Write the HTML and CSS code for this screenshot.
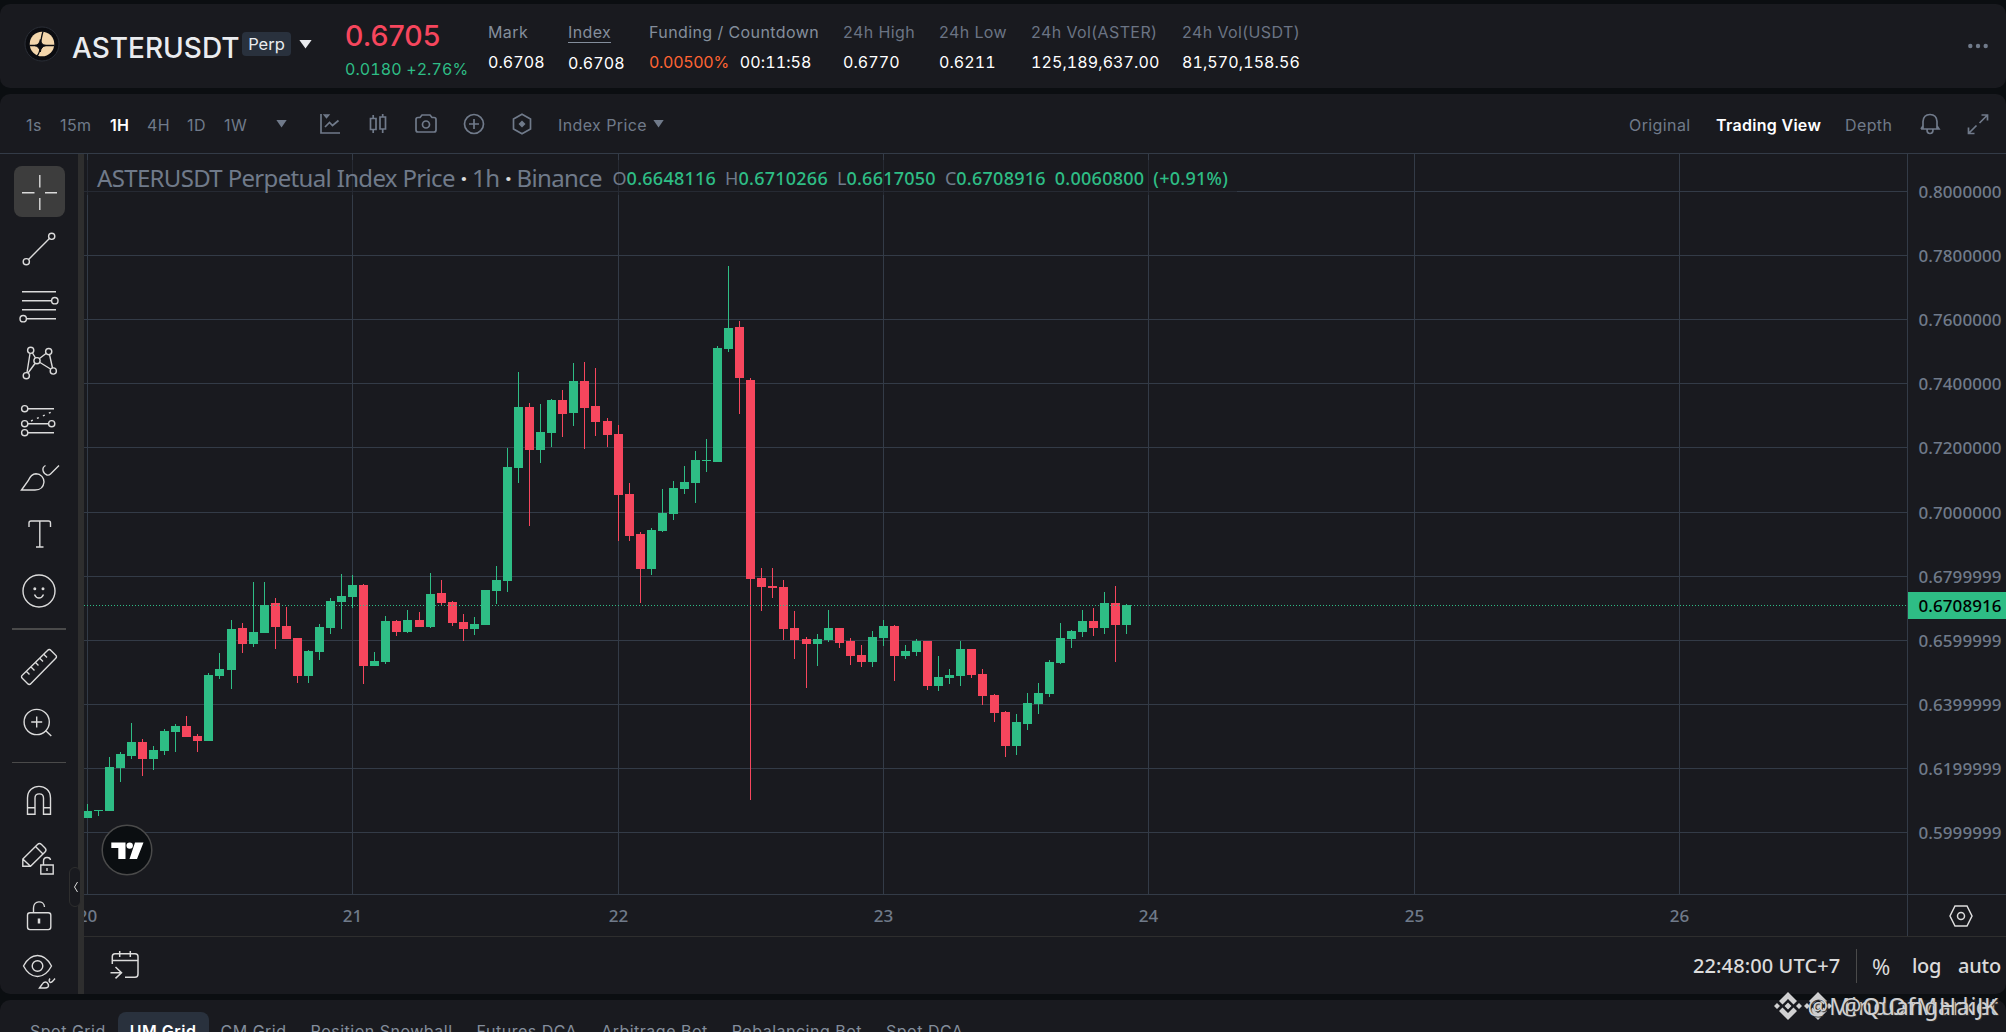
FILE: index.html
```html
<!DOCTYPE html>
<html lang="en">
<head>
  <meta charset="UTF-8" />
  <meta name="viewport" content="width=device-width, initial-scale=1.0" />
  <title>ASTERUSDT Perpetual</title>
  <link rel="stylesheet" href="styles.css">
</head>
<body>
  <header class="ticker">
    <svg class="coin" width="36" height="36" viewBox="0 0 36 36">
      <circle cx="18" cy="18" r="17" fill="#0b0c10" stroke="#2a2e36"/>
      <circle cx="18" cy="18" r="12.3" fill="#f3d6ab"/>
      <path d="M19 5.500C17.500 10 17 14 16.500 19M5.500 19.500H30.500M16.500 20C16 25 15 28 13 30" fill="none" stroke="#0b0c10" stroke-width="1.300"/>
      <path d="M16.300 13.500Q17 19 22 19.500Q17 20.500 16.300 26Q15.500 20.500 10.500 19.500Q15.500 19 16.300 13.500Z" fill="#0b0c10" stroke="#0b0c10"/>
    </svg>
    <h1 class="symbol">ASTERUSDT</h1>
    <span class="perp">Perp</span>
    <span class="caret caret-lg"></span>
    <div class="price">
      <strong>0.6705</strong>
      <span>0.0180 +2.76%</span>
    </div>
    <dl class="stats">
      <div><dt>Mark</dt><dd>0.6708</dd></div>
      <div class="index"><dt><span>Index</span></dt><dd>0.6708</dd></div>
      <div><dt>Funding / Countdown</dt><dd><em>0.00500%</em>00:11:58</dd></div>
      <div class="dim"><dt>24h High</dt><dd>0.6770</dd></div>
      <div class="dim"><dt>24h Low</dt><dd>0.6211</dd></div>
      <div class="dim"><dt>24h Vol(ASTER)</dt><dd>125,189,637.00</dd></div>
      <div class="dim"><dt>24h Vol(USDT)</dt><dd>81,570,158.56</dd></div>
    </dl>
    <svg class="more" width="20" height="6" viewBox="0 0 20 6"><circle cx="2.300" cy="3" r="2.200"/><circle cx="10" cy="3" r="2.200"/><circle cx="17.700" cy="3" r="2.200"/></svg>
  </header>

  <main class="panel">
    <nav class="toolbar">
      <div class="intervals">
        <span>1s</span><span>15m</span><span class="active">1H</span><span>4H</span><span>1D</span><span>1W</span>
      </div>
      <span class="caret"></span>
      <div class="icons">
        <svg viewBox="0 0 24 24"><path d="M3 2V21H22M7 15L11.500 10.500L14.500 13.500L20.500 8.500M6.500 3L8.500 5.500L10.500 3Z"/></svg>
        <svg viewBox="0 0 24 24"><path d="M4.500 6.500H10V17.500H4.500ZM7.200 3V6.500M7.200 17.500V21M14 5H19.500V17H14ZM16.700 2V5M16.700 17V21"/></svg>
        <svg viewBox="0 0 24 24"><path d="M2 7.500Q2 5.500 4 5.500H6L8 3H16L18 5.500H20Q22 5.500 22 7.500V18Q22 20 20 20H4Q2 20 2 18Z"/><circle cx="12" cy="12.500" r="3.500"/></svg>
        <svg viewBox="0 0 24 24"><circle cx="12" cy="12" r="9.500"/><path d="M12 7V17M7 12H17"/></svg>
        <svg viewBox="0 0 24 24"><path d="M12 2.300L20.500 7V17L12 21.700L3.500 17V7Z"/><path d="M12 8.500L15.500 12L12 15.500L8.500 12Z" fill="#707a8a" stroke="none"/></svg>
      </div>
      <span class="source">Index Price</span>
      <span class="caret"></span>
      <div class="views">
        <span>Original</span><span class="active">Trading View</span><span>Depth</span>
      </div>
      <svg class="bell" viewBox="0 0 24 24"><path d="M5 16.500V9.500Q5.500 2.500 12 2.500Q18.500 2.500 19 9.500V16.500M3 17H21L19 14M3 17L5 14M9 17.500Q9 21.500 12 21.500Q15 21.500 15 17.500"/></svg>
      <svg class="expand" viewBox="0 0 24 24"><path d="M15.500 3H21.500V8.500M21 3.500L13.500 11M2.500 15.500V21.500H8.500M3 21L10.500 13.500"/></svg>
    </nav>

    <div class="workspace">
      <aside class="tools">
        <svg class="tool" viewBox="13 163 54 57"><rect x="14" y="166" width="51" height="51" rx="8" fill="#3d3d3d" stroke="none"/><path d="M39.800 175V187.500M39.800 198V210M22 192.700H34.500M45 192.700H57"/></svg>
        <svg class="tool" viewBox="13 220 54 57"><circle cx="51.700" cy="236.300" r="3.100"/><circle cx="26.300" cy="261.700" r="3.100"/><path d="M28.600 259.400L49.400 238.600"/></svg>
        <svg class="tool" viewBox="13 277 54 57"><path d="M22 291.700H56M22 300.700H51.500M22 309.700H56M26.500 318.700H56"/><circle cx="54.800" cy="300.700" r="3.200"/><circle cx="23.200" cy="318.700" r="3.200"/></svg>
        <svg class="tool" viewBox="13 334 54 57"><path d="M27 372.500L30 353.500M32.500 353L35.500 358M28 373L35 363.500M39.500 358.500L46 353.500M49.500 354.500L52.500 368M40 362.500L50.500 369"/><circle cx="30.700" cy="350.300" r="3.100"/><circle cx="48.700" cy="351.600" r="3.100"/><circle cx="37" cy="360.700" r="3.100"/><circle cx="53.300" cy="371" r="3.100"/><circle cx="26.300" cy="375.700" r="3.100"/></svg>
        <svg class="tool" viewBox="13 391 54 57"><path d="M28 408.700H54M28 423.700H48.500M28 432.700H54"/><path d="M31 421L54 411" stroke-dasharray="2 4.500"/><circle cx="24.700" cy="408.700" r="3.100"/><circle cx="24.700" cy="423.700" r="3.100"/><circle cx="51.700" cy="423.700" r="3.100"/><circle cx="24.700" cy="432.700" r="3.100"/></svg>
        <svg class="tool" viewBox="13 448 54 57"><path d="M21.500 490L28 481Q31 474 36 473.700C41 473.700 44 478 44 482C43.500 487 40 490 35 490ZM45.500 465.500C41 468 43 473.500 47 475Q49 475.500 50.500 474L59 465.500"/></svg>
        <svg class="tool" viewBox="13 505 54 57"><path d="M29 527V523Q29 521 31 521H48.500Q50.500 521 50.500 523V527M39.800 521V547M36 547H43.500"/></svg>
        <svg class="tool" viewBox="13 562 54 57"><circle cx="39" cy="591" r="16"/><path d="M34.500 594.500Q36 598 39 598Q42 598 43.500 594.500"/><circle cx="34.800" cy="588.700" r=".8"/><circle cx="43" cy="588.700" r=".8"/></svg>
        <hr class="thick">
        <svg class="tool" viewBox="13 639 54 57"><path d="M47.500 650.500Q49.300 648.500 51 650.500L55.500 655Q57.500 656.700 55.500 658.500L31 683.500Q29.300 685.500 27.500 683.500L22.500 678.500Q20.500 676.700 22.500 675ZM26.500 671.500L29.500 674.500M31 667L34.500 670.500M35.500 662.500L38.500 665.500M40 658.500L43 661.500M44 654.500L47 657.500"/></svg>
        <svg class="tool" viewBox="13 696 54 57"><circle cx="36.700" cy="722" r="12.600"/><path d="M36.700 716.500V727.500M31.200 722H42.200M45.500 730.500L51.300 736"/></svg>
        <hr>
        <svg class="tool" viewBox="13 773 54 57"><path d="M27.500 814.300V798C27.500 782.500 50.500 782.500 50.500 798V814.300H43.500V798C43.500 792.500 35 792.500 35 798V814.300ZM27.500 807.700H35M43.500 807.700H50.500"/></svg>
        <svg class="tool" viewBox="13 830 54 57"><path d="M22.800 866.300V859L37.500 844.500Q39.500 842.500 41.500 844.500L45 848Q47 850 45 852L30.500 866.300ZM22.800 859L30.500 866.300M35.500 846.500L43 854M40.800 865H53.200V874H40.800ZM43.500 865V861C43.500 856.500 50 856.500 50.500 860M47 868V871"/></svg>
        <svg class="tool" viewBox="13 887 54 57"><rect x="27.500" y="912.800" width="23.300" height="16.800" rx="2.500"/><path d="M33.500 912.500V908C33.500 900 44 900 44.500 907"/><path d="M39 918.500V923.500" stroke-width="2.500"/></svg>
        <svg class="tool last" viewBox="13 944 54 50"><path d="M23.500 966Q29 955.500 37.500 955.500Q46 955.500 51.500 966Q46 976.500 37.500 976.500Q29 976.500 23.500 966ZM39.500 988L42 984.500Q44 981 47 982.500Q49.500 985 48 987Q47 988 45 988ZM50 978.500Q48 981.500 50.500 982.500Q52 982.500 55 978.500"/><circle cx="37.500" cy="966" r="5.300"/></svg>
      </aside>

      <div class="chart">
        <div class="plot-row">
          <svg class="plot" id="plot" viewBox="84 154 1823 740"></svg>
          <svg class="price-axis" id="priceAxis" viewBox="1908 154 98 740"></svg>
        </div>
        <div class="time-row">
          <svg class="time-axis" id="timeAxis" viewBox="84 895 1823 41"></svg>
          <div class="axis-settings">
            <svg width="24" height="24" viewBox="0 0 24 24"><path d="M6 2H18L23 12L18 22H6L1 12Z"/><circle cx="12" cy="12" r="3.500"/></svg>
          </div>
        </div>
        <div class="footer">
          <svg class="goto" width="30" height="30" viewBox="110 950 30 30"><path d="M112.300 964V956.500Q112.300 953.700 115 953.700H135Q138 953.700 138 956.500V974Q138 977.300 135 977.300H125M112.300 960.500H138M119.700 951V957M130.300 951V957M110.500 972.700H121.500M115.500 967L121.500 972.700L115.500 978.400"/></svg>
          <span class="clock">22:48:00 UTC+7</span>
          <span class="percent">%</span>
          <span class="log">log</span>
          <span class="auto">auto</span>
        </div>

        <div class="legend">
          <span class="title">ASTERUSDT Perpetual Index Price <b>·</b> 1h <b>·</b> Binance</span>
          <span class="ohlc">O<i>0.6648116</i></span>
          <span class="ohlc">H<i>0.6710266</i></span>
          <span class="ohlc">L<i>0.6617050</i></span>
          <span class="ohlc">C<i>0.6708916</i></span>
          <span class="ohlc"><i>0.0060800</i></span>
          <span class="ohlc"><i>(+0.91%)</i></span>
        </div>
        <svg class="tv-logo" width="52" height="52" viewBox="0 0 52 52">
          <circle cx="26" cy="26" r="24.800" fill="#0b0e11" stroke="#4a4a4a" stroke-width="1.500"/>
          <path d="M10.300 18.400H24.500V35H17.300V24H10.300ZM34 18.400H42.500L36 35H28.500Z" fill="#fff"/>
          <circle cx="28.700" cy="21.600" r="3.200" fill="#fff"/>
        </svg>
      </div>
      <div class="collapse"><svg width="6" height="12" viewBox="0 0 6 12"><path d="M4.500 1L1.500 6L4.500 11"/></svg></div>
    </div>
  </main>

  <nav class="bots">
    <span>Spot Grid</span>
    <span class="active">UM Grid</span>
    <span>CM Grid</span>
    <span>Position Snowball</span>
    <span>Futures DCA</span>
    <span>Arbitrage Bot</span>
    <span>Rebalancing Bot</span>
    <span>Spot DCA</span>
  </nav>

  <div class="watermark">
    <svg width="60" height="30" viewBox="0 0 60 30">
      <g id="mark"><path d="M15 1L24 10L20.500 13.500L15 8L9.500 13.500L6 10ZM15 29L24 20L20.500 16.500L15 22L9.500 16.500L6 20ZM15 11.500L18.500 15L15 18.500L11.500 15ZM4 12L7 15L4 18L1 15ZM26 12L29 15L26 18L23 15Z"/></g>
      <use href="#mark" x="30"/>
    </svg>
    <span class="first">@MindOfMarket</span>
    <span class="second">@QuangHaiJK</span>
  </div>

  <script src="chart.js"></script>
</body>
</html>
```
FILE: styles.css
```css
* {
  box-sizing: border-box;
}
body {
  margin: 0;
  padding-top: 4px;
  width: 2006px;
  height: 1032px;
  overflow: hidden;
  position: relative;
  background: #0b0e11;
  color: #eaecef;
  font-family: Inter, "Liberation Sans", sans-serif;
  font-size: 16px;
}
svg {
  display: block;
  flex: none;
}
span, strong, dt, dd {
  white-space: nowrap;
}
.caret {
  width: 11px;
  height: 8px;
  background: #707a8a;
  clip-path: polygon(0 0, 100% 0, 50% 100%);
}

/* ticker header */
.ticker {
  display: flex;
  align-items: center;
  height: 84px;
  padding: 0 18px 0 24px;
  background: #191a1f;
  border-radius: 10px;
}
.coin {
  margin-top: -4px;
}
.symbol {
  width: 170px;
  margin: 3px 0 0 12px;
  font-size: 28px;
  font-weight: 500;
}
.perp {
  width: 49px;
  height: 24px;
  margin-top: -4px;
  border-radius: 4px;
  background: #29313d;
  font-size: 16.5px;
  line-height: 24px;
  text-align: center;
}
.caret-lg {
  width: 13px;
  height: 9px;
  margin: -4px 33px 0 8px;
  background: #eaecef;
}
.price {
  display: flex;
  flex-direction: column;
  width: 143px;
  margin-top: 11px;
}
.price strong {
  height: 35px;
  color: #f6465d;
  font-size: 28.5px;
  font-weight: 500;
  line-height: 32px;
}
.price span {
  color: #2ebd85;
  line-height: 28px;
  font-variant-numeric: tabular-nums;
  letter-spacing: 0.1px;
}
.stats {
  display: grid;
  grid-template-columns: 80px 81px 194px 96px 92px 151px 130px;
  height: 60px;
  margin: 2px 0 0;
}
.stats dt {
  color: #848e9c;
  line-height: 30px;
  letter-spacing: 0.4px;
}
.stats .dim dt {
  color: #6b7484;
}
.stats dd {
  margin: 0;
  line-height: 30px;
  color: #fff;
  font-variant-numeric: tabular-nums;
  letter-spacing: 0.1px;
}
.stats em {
  margin-right: 11px;
  color: #ff6433;
  font-style: normal;
  letter-spacing: -0.3px;
}
.index span {
  display: inline-block;
  height: 26px;
  border-bottom: 1px solid #848e9c;
}
.index dt {
  height: 30px;
}
.index dd {
  margin-top: 1px;
}
.more {
  margin-left: auto;
  fill: #707a8a;
}

/* chart panel */
.panel {
  height: 900px;
  margin-top: 6px;
  background: #191a1f;
  border-radius: 10px;
  overflow: hidden;
}
.toolbar {
  display: flex;
  align-items: center;
  height: 60px;
  padding: 3px 16px 0 26px;
  border-bottom: 1px solid #333b47;
  color: #707a8a;
  letter-spacing: 0.4px;
}
.toolbar .active {
  color: #fff;
  font-weight: 600;
  letter-spacing: 0.3px;
}
.toolbar svg {
  width: 24px;
  height: 24px;
  margin-top: -3px;
  fill: none;
  stroke: #707a8a;
  stroke-width: 1.7;
}
.toolbar .caret {
  margin-top: -3px;
}
.intervals {
  display: grid;
  grid-template-columns: 34px 50px 37px 40px 37px 52px;
}
.icons {
  display: flex;
  gap: 24px;
  margin: 0 24px 0 31px;
}
.source {
  width: 95px;
}
.views {
  display: grid;
  grid-template-columns: 87px 129px 73px;
  margin-left: auto;
}
.expand {
  margin-left: 24px;
}

.workspace {
  position: relative;
  display: flex;
  height: 840px;
}
.tools {
  width: 84px;
  padding: 9px 0 0 13px;
  border-right: 6px solid #2e2e2e;
}
.tool {
  width: 54px;
  height: 57px;
  fill: none;
  stroke: #dbdbdb;
  stroke-width: 1.4;
}
.tool.last {
  height: 50px;
}
.tools hr {
  width: 54px;
  height: 1px;
  margin: 9px 0 10px -1px;
  border: 0;
  background: #4a4a4a;
}
.tools hr.thick {
  height: 2px;
  margin-bottom: 9px;
}
.collapse {
  position: absolute;
  left: 69px;
  top: 713px;
  width: 12px;
  height: 40px;
  padding: 13px 0 0 3px;
  border: 1px solid #2e2e2e;
  border-radius: 6px;
  background: #191a1f;
}
.collapse svg {
  fill: none;
  stroke: #dbdbdb;
}

.chart {
  position: relative;
  width: 1922px;
}
.plot-row {
  display: flex;
  height: 741px;
  border-bottom: 1px solid #333b47;
}
.plot {
  width: 1823px;
  height: 740px;
  shape-rendering: crispEdges;
}
.price-axis {
  width: 99px;
  height: 740px;
  border-left: 1px solid #333b47;
}
.price-axis text,
.time-axis text {
  fill: #707a8a;
  font-family: "Noto Sans", sans-serif;
  font-size: 17px;
  font-weight: 500;
}
.price-axis .last-price {
  fill: #000;
}
.grid-line {
  fill: #333b47;
}
.up {
  fill: #2ebd85;
}
.down {
  fill: #f6465d;
}
.last-line {
  stroke: #2ebd85;
  stroke-dasharray: 1 2;
}
.time-row {
  display: flex;
  height: 42px;
  border-bottom: 1px solid #2e2e2e;
}
.time-axis {
  width: 1823px;
  height: 41px;
}
.time-axis text {
  text-anchor: middle;
}
.axis-settings {
  width: 99px;
  padding: 9px 0 0 41px;
  border-left: 1px solid #333b47;
}
.axis-settings svg,
.goto {
  fill: none;
  stroke: #dbdbdb;
  stroke-width: 1.5;
}
.goto {
  margin-top: -2px;
}
.footer {
  display: flex;
  align-items: center;
  height: 57px;
  padding: 0 6px 0 26px;
  color: #dbdbdb;
  font-family: "Noto Sans", sans-serif;
  font-size: 20px;
  font-weight: 500;
}
.clock {
  width: 164px;
  margin-left: auto;
  line-height: 34px;
  border-right: 1px solid #4a4a4a;
  letter-spacing: 0.1px;
}
.percent {
  width: 20px;
  margin-left: 15px;
  font-size: 22px;
  font-weight: 400;
}
.log {
  width: 28px;
  margin-left: 20px;
  letter-spacing: -0.3px;
}
.auto {
  width: 42px;
  margin-left: 18px;
  letter-spacing: -0.2px;
}

.legend {
  position: absolute;
  left: 0;
  top: 6px;
  display: flex;
  align-items: center;
  width: 1153px;
  height: 35px;
  padding-left: 13px;
  background: rgba(25, 26, 31, 0.5);
  color: #707a8a;
  font-family: "Noto Sans", sans-serif;
  font-size: 18px;
}
.legend .title {
  width: 516px;
  font-size: 24px;
  letter-spacing: -0.66px;
}
.legend b {
  color: #dbdbdb;
}
.legend i {
  color: #2ebd85;
  font-style: normal;
  font-weight: 500;
  letter-spacing: 0.25px;
}
.ohlc {
  margin-right: 9px;
}
.tv-logo {
  position: absolute;
  left: 17px;
  top: 670px;
}

/* bot tabs */
.bots {
  display: flex;
  gap: 24px;
  height: 60px;
  margin-top: 6px;
  padding: 12px 0 0 30px;
  background: #191a1f;
  border-radius: 10px;
  color: #848e9c;
  line-height: 39px;
  letter-spacing: 0.5px;
}
.bots .active {
  margin: 0 -12px;
  padding: 0 12px;
  border-radius: 8px;
  background: #29313d;
  color: #fff;
  font-weight: 600;
}

.watermark {
  position: absolute;
  left: 1773px;
  top: 991px;
  width: 233px;
  height: 30px;
  color: #fff;
  fill: #fff;
  opacity: 0.8;
  font-family: "Noto Sans", sans-serif;
  font-size: 23px;
  line-height: 30px;
  text-shadow: 1px 1px 1px #333;
}
.watermark span {
  position: absolute;
  top: 0;
  right: 7px;
}
.watermark .first {
  letter-spacing: 1px;
}
.watermark .second {
  letter-spacing: 0.7px;
}
```
FILE: chart.js
```js
// x, high, body top, body bottom, low, 1 = up / 0 = down
const candles = [
  [87,804,811,818,818,1],[98,810,810,811,816,1],[109,757,767,811,811,1],[120,752,754,768,782,1],
  [131,723,742,756,759,1],[142,739,742,759,776,0],[153,746,750,759,770,1],[164,729,731,751,755,1],
  [175,724,726,732,752,1],[186,716,726,737,737,0],[197,734,736,741,752,0],[208,673,675,741,741,1],
  [219,653,669,676,679,1],[231,620,629,670,689,1],[242,623,628,644,653,0],[253,582,632,644,647,1],
  [264,582,605,633,633,1],[275,598,603,627,649,0],[286,607,626,639,639,0],[297,638,638,676,683,0],
  [308,650,651,676,683,1],[319,624,627,652,660,1],[330,598,601,628,634,1],[341,574,596,602,629,1],
  [352,575,585,597,608,1],[363,584,585,666,684,0],[374,652,661,666,666,1],[385,616,621,662,664,1],
  [396,620,621,632,636,0],[407,610,620,632,633,1],[419,612,620,627,627,0],[430,573,594,627,628,1],
  [441,580,593,603,605,0],[452,601,602,623,626,0],[463,614,622,629,641,0],[474,617,624,629,635,1],
  [485,590,590,625,625,1],[496,566,580,591,604,1],[507,448,467,581,592,1],[518,372,407,468,483,1],
  [529,403,407,450,526,0],[540,404,432,450,463,1],[551,399,400,433,447,1],[562,390,400,414,437,0],
  [573,363,381,413,426,1],[584,362,381,408,449,0],[595,368,406,422,436,0],[607,418,421,435,447,0],
  [618,425,434,495,541,0],[629,483,494,536,541,0],[640,532,534,569,603,0],[651,528,530,569,575,1],
  [662,489,513,531,532,1],[673,481,488,514,520,1],[684,466,482,489,494,1],[695,451,460,483,503,1],
  [706,439,460,461,472,1],[717,346,348,462,462,1],[728,266,328,349,352,1],[739,321,327,378,414,0],
  [750,378,380,579,800,0],[761,568,578,587,611,0],[772,568,586,588,598,0],[783,580,587,629,640,0],
  [794,611,628,640,659,0],[806,637,639,644,688,0],[817,634,639,644,666,1],[828,610,628,640,642,1],
  [839,628,628,643,648,0],[850,638,641,656,665,0],[861,645,655,662,667,0],[872,631,637,662,667,1],
  [883,620,626,638,646,1],[894,625,626,656,681,0],[905,645,651,656,659,1],[916,639,641,652,656,1],
  [927,641,641,686,690,0],[938,656,677,686,691,1],[949,669,675,678,684,1],[960,641,649,676,686,1],
  [971,649,649,675,678,0],[982,669,674,696,705,0],[994,694,695,713,722,0],[1005,711,712,746,757,0],
  [1016,714,722,746,755,1],[1027,693,703,724,730,1],[1038,683,693,704,714,1],[1049,660,662,694,697,1],
  [1060,623,638,663,664,1],[1071,630,631,639,648,1],[1082,610,621,632,637,1],[1093,608,621,628,636,0],
  [1104,592,603,628,634,1],[1115,586,603,625,662,0],[1126,604,605,625,634,1]
];
const days = [[20, 87], [21, 352], [22, 618], [23, 883], [24, 1148], [25, 1414], [26, 1679]];
const prices = [
  ['0.8000000', 191], ['0.7800000', 255], ['0.7600000', 319], ['0.7400000', 383],
  ['0.7200000', 447], ['0.7000000', 512], ['0.6799999', 576], ['0.6599999', 640],
  ['0.6399999', 704], ['0.6199999', 768], ['0.5999999', 832]
];
const lastY = 605;

const rect = (cls, x, y, w, h) => `<rect class="${cls}" x="${x}" y="${y}" width="${w}" height="${h}"/>`;
const priceText = (cls, y, label) => `<text class="${cls}" x="1918.5" y="${y + 6.5}" textLength="83">${label}</text>`;

let out = '';
days.forEach(([, x]) => { out += rect('grid-line', x, 154, 1, 740); });
prices.forEach(([, y]) => { out += rect('grid-line', 84, y, 1823, 1); });
candles.forEach(([x, high, top, bottom, low, up]) => {
  const cls = up ? 'up' : 'down';
  out += rect(cls, x, high, 1, low - high) + rect(cls, x - 4, top, 9, bottom - top);
});
out += `<line class="last-line" x1="84" x2="1907" y1="${lastY + 0.5}" y2="${lastY + 0.5}"/>`;
document.getElementById('plot').innerHTML = out;

document.getElementById('priceAxis').innerHTML =
  prices.map(([label, y]) => priceText('', y, label)).join('') +
  rect('up', 1908, 592, 98, 27) + priceText('last-price', lastY, '0.6708916');

document.getElementById('timeAxis').innerHTML =
  days.map(([d, x]) => `<text x="${x + 0.5}" y="922">${d}</text>`).join('');
```
